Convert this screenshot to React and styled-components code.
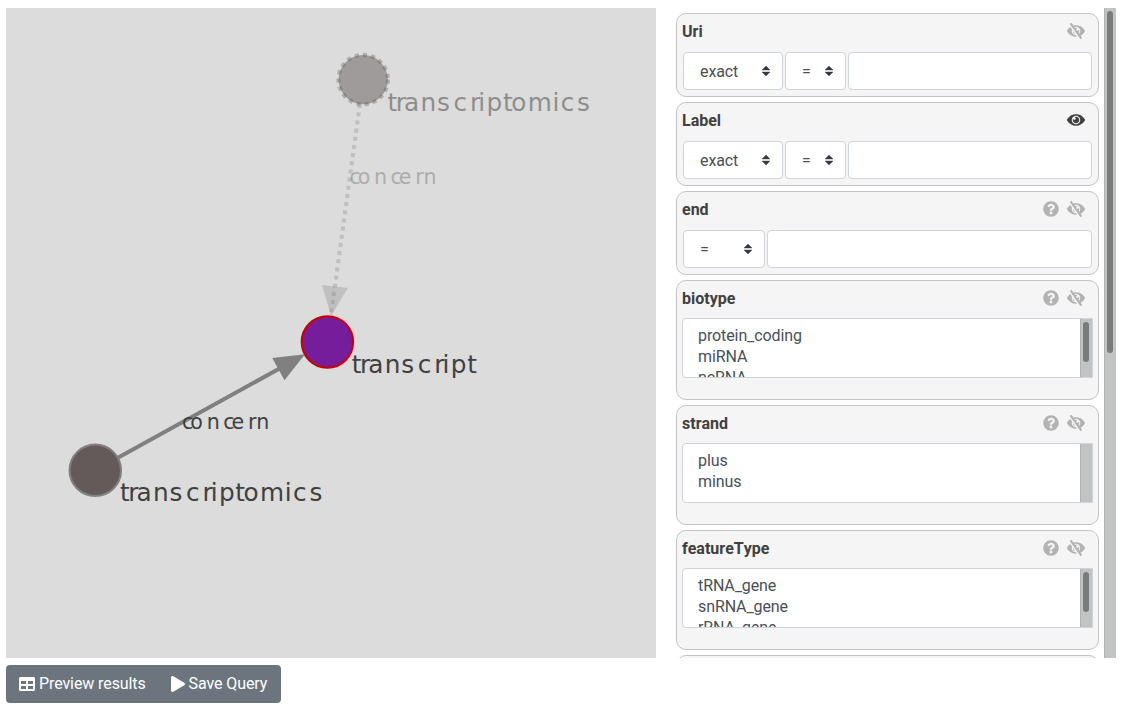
import React from "react";
import styled, { createGlobalStyle } from "styled-components";
import { FaQuestionCircle, FaTable } from "react-icons/fa";

const GlobalStyle = createGlobalStyle`
  *, *::before, *::after { box-sizing: border-box; }
  body {
    margin: 0;
    background: #fff;
    color: #404040;
    font: 400 16px/24px Roboto, sans-serif;
    overflow: hidden;
  }
`;

const Page = styled.main`
  display: flex;
  flex-direction: column;
  align-items: flex-start;
  gap: 7px;
  padding: 8px 6px;
`;
const Workspace = styled.div`
  display: flex;
  gap: 20px;
  height: 650px;
`;
const Graph = styled.svg`
  display: block;
  flex: none;
  width: 650px;
  height: 650px;
  background: #dcdcdc;
`;
const GraphText = styled.text`
  font-family: "DejaVu Sans", sans-serif;
  font-size: ${(p) => p.$size}px;
  fill: #404040;
`;
const Attributes = styled.section`
  display: flex;
  gap: 5px;
  width: 440px;
  overflow: hidden;
`;
const Cards = styled.div`
  flex: none;
  display: flex;
  flex-direction: column;
  gap: 5px;
  width: 423px;
  padding-top: 5px;
`;
const Card = styled.div`
  flex: none;
  height: ${(p) => (p.$tall ? 120 : 84)}px;
  padding: 5px;
  border: 1px solid #c4c4c4;
  border-radius: 10px;
  background: #f5f5f5;
`;
const CardHead = styled.header`
  display: flex;
  align-items: center;
  height: 24px;
  margin-bottom: ${(p) => (p.$tall ? 8 : 9)}px;
  padding-right: 8px;
`;
const Title = styled.label`
  flex: 1;
  padding-top: 2px;
  font-weight: 700;
  font-kerning: none;
`;
const HeadIcons = styled.span`
  display: flex;
  align-items: center;
  gap: 8px;
  color: ${(p) => (p.$active ? "#404040" : "#b3b3b3")};
  svg { display: block; }
`;
const Controls = styled.div`
  display: grid;
  grid-template-columns: ${(p) => p.$columns};
  gap: 2px;
  padding: 0 1px;
`;
const Select = styled.div`
  display: flex;
  align-items: center;
  justify-content: space-between;
  height: 38px;
  padding: 0 12px 0 16px;
  border: 1px solid #ced4da;
  border-radius: 4px;
  background: #fff;
  color: #495057;
  letter-spacing: -0.1px;
`;
const SelectValue = styled.span`
  padding-top: 2px;
`;
const Input = styled.input`
  width: 100%;
  height: 38px;
  border: 1px solid #ced4da;
  border-radius: 4px;
  background: #fff;
  outline: 0;
`;
const List = styled.div`
  display: flex;
  justify-content: space-between;
  width: 411px;
  height: 60px;
  border: 1px solid #ced4da;
  border-radius: 4px 0 0 4px;
  background: #fff;
  overflow: hidden;
`;
const Options = styled.ul`
  margin: 0;
  padding: 6px 15px;
  list-style: none;
  color: #495057;
  line-height: 21px;
  letter-spacing: -0.1px;
`;
const Track = styled.div`
  flex: none;
  width: 12px;
  padding: 3px 3px 3px 2px;
  border-left: 1px solid #b1b3b2;
  background: #c2c4c3;
`;
const Thumb = styled.div`
  width: 6px;
  height: ${(p) => p.$length}px;
  border-radius: 3px;
  background: #787c7c;
`;
const ButtonGroup = styled.div`
  display: flex;
  width: 275px;
  height: 38px;
  border-radius: 4px;
  background: #6c757d;
`;
const Button = styled.button`
  display: flex;
  align-items: center;
  gap: 4px;
  padding: 0 12px 0 ${(p) => p.$left}px;
  border: 0;
  background: none;
  color: #fff;
  font: inherit;
  letter-spacing: -0.1px;
  white-space: nowrap;
`;

const SCALE = 8.24;
const WIDE = "ansconpe";
const advance = (c) => (c === "m" ? 3 : WIDE.includes(c) ? 2 : 1);

// Letters sit on whole units of the graph's zoom scale.
function Label({ x, y, steps, size = 3, children }) {
  let pos = x;
  const xs = [...children].map((c, i) => {
    const at = pos;
    pos += (steps ? steps[i] : advance(c)) * SCALE;
    return at.toFixed(2);
  });
  return <GraphText $size={size * SCALE} x={xs.join(" ")} y={y}>{children}</GraphText>;
}

const CONCERN = [1, 2, 2, 1, 2, 1, 2];

function GraphNode({ x, y, fill, stroke = "#808080", suggested }) {
  return (
    <>
      <circle cx={x} cy={y} r="24.7" fill="none" stroke={stroke} strokeWidth="4.12"
        strokeOpacity={suggested ? 0.5 : 1} strokeDasharray={suggested ? "4.12" : undefined} />
      <circle cx={x} cy={y} r="24.7" fill={fill} fillOpacity={suggested ? 0.5 : 1} />
    </>
  );
}

function QueryGraph() {
  return (
    <Graph viewBox="6 8 650 650">
      <line x1="359.85" y1="104.1" x2="330.8" y2="316.4" stroke="#808080" strokeOpacity=".3" strokeWidth="4.12" strokeDasharray="4.12" />
      <path d="M322 285L347.7 288L331 316Z" fill="#808080" fillOpacity=".3" />
      <line x1="95.3" y1="470.3" x2="285" y2="365.5" stroke="#808080" strokeWidth="4.12" />
      <path d="M272.3 358L305 354.3L284.5 380.3Z" fill="#808080" />
      <GraphNode x={363.2} y={79.6} fill="#645a5a" suggested />
      <GraphNode x={95.3} y={470.3} fill="#645a5a" />
      <GraphNode x={327.4} y={342} fill="#751d9b" stroke="#cc0000" />
      <g opacity="0.5"><Label x={387.6} y={111}>transcriptomics</Label></g>
      <Label x={351.8} y={372.8}>transcript</Label>
      <Label x={120} y={500.8}>transcriptomics</Label>
      <g opacity="0.3"><Label x={349.4} y={184} size={2.5} steps={CONCERN}>concern</Label></g>
      <Label x={182} y={429} size={2.5} steps={CONCERN}>concern</Label>
    </Graph>
  );
}

function Chevron() {
  return (
    <svg width="8" height="10" viewBox="0 0 4 5">
      <path fill="#343a40" stroke="#343a40" strokeWidth=".2" d="M2 0L0 2h4zm0 5L0 3h4z" />
    </svg>
  );
}

function Eye() {
  return (
    <svg width="18" height="16" viewBox="0 0 576 512" fill="currentColor">
      <path d="M569.354 231.631C512.969 135.949 407.81 72 288 72 168.14 72 63.004 135.994 6.646 231.631a47.999 47.999 0 0 0 0 48.739C63.031 376.051 168.19 440 288 440c119.86 0 224.996-63.994 281.354-159.631a47.997 47.997 0 0 0 0-48.738zM288 392c-75.162 0-136-60.827-136-136 0-75.162 60.826-136 136-136 75.162 0 136 60.826 136 136 0 75.162-60.826 136-136 136zm104-136c0 57.438-46.562 104-104 104s-104-46.562-104-104c0-17.708 4.431-34.379 12.236-48.973l-.001.032c0 23.651 19.173 42.823 42.824 42.823s42.824-19.173 42.824-42.823c0-23.651-19.173-42.824-42.824-42.824l-.032.001C253.621 156.431 270.292 152 288 152c57.438 0 104 46.562 104 104z" />
    </svg>
  );
}

function EyeSlash() {
  return (
    <svg width="18" height="16" viewBox="0 0 576 512" fill="currentColor">
      <path d="M286.693 391.984l32.579 46.542A333.958 333.958 0 0 1 288 440C168.19 440 63.031 376.051 6.646 280.369a47.999 47.999 0 0 1 0-48.739c24.023-40.766 56.913-75.775 96.024-102.537l57.077 81.539C154.736 224.82 152 240.087 152 256c0 74.736 60.135 135.282 134.693 135.984zm282.661-111.615c-31.667 53.737-78.747 97.46-135.175 125.475l.011.015 41.47 59.2c7.6 10.86 4.96 25.82-5.9 33.42l-13.11 9.18c-10.86 7.6-25.82 4.96-33.42-5.9L100.34 46.94c-7.6-10.86-4.96-25.82 5.9-33.42l13.11-9.18c10.86-7.6 25.82-4.96 33.42 5.9l51.038 72.617C230.68 75.776 258.905 72 288 72c119.81 0 224.969 63.949 281.354 159.631a48.002 48.002 0 0 1 0 48.738zM424 256c0-75.174-60.838-136-136-136-17.939 0-35.056 3.473-50.729 9.772l19.299 27.058c25.869-8.171 55.044-6.163 80.4 7.41h-.03c-23.65 0-42.82 19.17-42.82 42.82 0 23.626 19.147 42.82 42.82 42.82 23.65 0 42.82-19.17 42.82-42.82v-.03c18.462 34.49 16.312 77.914-8.25 110.95v.01l19.314 27.061C411.496 321.2 424 290.074 424 256zM262.014 356.727l-77.53-110.757c-5.014 52.387 29.314 98.354 77.53 110.757z" />
    </svg>
  );
}

function Play() {
  return (
    <svg width="14" height="16" viewBox="0 0 448 512" fill="currentColor">
      <path d="M424.4 214.7L72.4 6.6C43.8-10.3 0 6.1 0 47.9V464c0 37.5 40.7 60.1 72.4 41.3l352-208c31.4-18.5 31.5-64.1 0-82.6z" />
    </svg>
  );
}

const attributes = [
  { name: "Uri", selects: ["exact", "="], columns: "100px 61px 1fr" },
  { name: "Label", selects: ["exact", "="], columns: "100px 61px 1fr", visible: true },
  { name: "end", selects: ["="], columns: "82px 1fr", help: true },
  { name: "biotype", options: ["protein_coding", "miRNA", "ncRNA"], help: true },
  { name: "strand", options: ["plus", "minus"], help: true },
  { name: "featureType", options: ["tRNA_gene", "snRNA_gene", "rRNA_gene"], help: true },
];

function Attribute({ name, selects, columns, options, help, visible }) {
  const tall = Boolean(options);
  return (
    <Card $tall={tall}>
      <CardHead $tall={tall}>
        <Title>{name}</Title>
        <HeadIcons $active={visible}>
          {help && <FaQuestionCircle size={16} />}
          {visible ? <Eye /> : <EyeSlash />}
        </HeadIcons>
      </CardHead>
      {tall ? (
        <List>
          <Options>{options.map((o) => <li key={o}>{o}</li>)}</Options>
          <Track>{options.length > 2 && <Thumb $length={40} />}</Track>
        </List>
      ) : (
        <Controls $columns={columns}>
          {selects.map((s) => <Select key={s}><SelectValue>{s}</SelectValue><Chevron /></Select>)}
          <Input />
        </Controls>
      )}
    </Card>
  );
}

export default function App() {
  return (
    <Page>
      <GlobalStyle />
      <Workspace>
        <QueryGraph />
        <Attributes>
          <Cards>
            {attributes.map((a) => <Attribute key={a.name} {...a} />)}
            <Card $tall />
          </Cards>
          <Track><Thumb $length={342} /></Track>
        </Attributes>
      </Workspace>
      <ButtonGroup>
        <Button $left={13}><FaTable size={16} />Preview results</Button>
        <Button $left={13}><Play />Save Query</Button>
      </ButtonGroup>
    </Page>
  );
}
